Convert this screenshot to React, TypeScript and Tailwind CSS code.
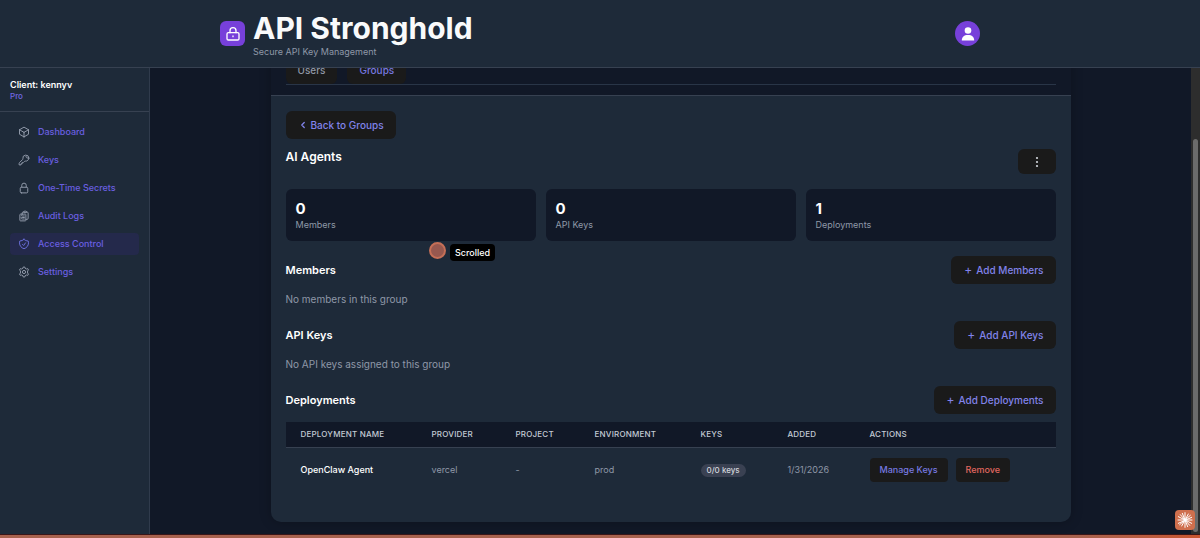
import React from 'react';
import {
  HiOutlineCube,
  HiOutlineKey,
  HiOutlineLockClosed,
  HiOutlineClipboardDocumentList,
  HiOutlineShieldCheck,
} from 'react-icons/hi2';
import { ChevronLeft } from 'lucide-react';

const HexGear = ({ className }: { className?: string }) => (
  <svg viewBox="0 0 24 24" fill="none" stroke="currentColor" strokeLinejoin="round" className={className}>
    <path d="M10.500 2h3l.8 2.600 2.500 1.400 2.700-.7 1.500 2.600-1.900 2v4.200l1.900 2-1.500 2.600-2.700-.7-2.500 1.400-.8 2.600h-3l-.8-2.600-2.500-1.400-2.700.7L3 16.100l1.900-2V9.900L3 7.900l1.500-2.600 2.700.7 2.500-1.400z" />
    <circle cx="12" cy="12" r="3.200" />
  </svg>
);

const navItems = [
  { label: 'Dashboard', icon: HiOutlineCube },
  { label: 'Keys', icon: HiOutlineKey },
  { label: 'One-Time Secrets', icon: HiOutlineLockClosed },
  { label: 'Audit Logs', icon: HiOutlineClipboardDocumentList },
  { label: 'Access Control', icon: HiOutlineShieldCheck, active: true },
  { label: 'Settings', icon: HexGear },
];

const stats = [
  { value: 0, label: 'Members' },
  { value: 0, label: 'API Keys' },
  { value: 1, label: 'Deployments' },
];

const Header = () => (
  <header className="h-[68px] shrink-0 border-b border-[#374151] bg-[#1e2a39]">
    <div className="mx-auto flex h-full max-w-[760px] items-center justify-between">
      <div className="flex items-center gap-2">
        <div className="flex size-[25px] items-center justify-center rounded-md bg-[#7740da] text-white">
          <svg viewBox="0 0 24 24" fill="none" stroke="currentColor" strokeWidth="2" strokeLinecap="round" className="size-4">
            <rect x="3" y="10" width="18" height="11" rx="2" />
            <path d="M7.500 10V7a4.500 4.500 0 0 1 9 0v3M12 15v1" />
          </svg>
        </div>
        <div>
          <h1 className="text-[30px] leading-[35px] font-bold text-[#f9fafb]">API Stronghold</h1>
          <p className="text-[9px] leading-[11px] text-[#8f98a8]">Secure API Key Management</p>
        </div>
      </div>
      <button aria-label="Account" className="flex size-[25px] items-center justify-center rounded-full bg-[#7740da] text-white">
        <svg viewBox="0 0 16 16" fill="currentColor" className="size-4">
          <circle cx="8" cy="4.500" r="3.300" />
          <path d="M1.800 14.500c0-3.500 2.200-5.500 6.200-5.500s6.200 2 6.200 5.500z" />
        </svg>
      </button>
    </div>
  </header>
);

const Sidebar = () => (
  <aside className="w-[150px] shrink-0 border-r border-[#303b4c] bg-[#1e2a39]">
    <div className="border-b border-[#374151] px-2.5 pt-[11px] pb-2.5">
      <p className="text-[9px] leading-3 font-semibold text-white">Client: kennyv</p>
      <p className="text-[8px] leading-[10px] font-medium text-[#7267e0]">Pro</p>
    </div>
    <nav className="flex flex-col gap-1.5 px-2.5 pt-[9px]">
      {navItems.map(({ label, icon: Icon, active }) => (
        <a
          key={label}
          href="#"
          className={`flex h-[22px] items-center gap-2 rounded px-2 text-[9px] font-medium text-[#6a5fe0] ${active ? 'bg-[#24294b]' : ''}`}
        >
          <Icon className={`size-3 stroke-2 ${active ? 'text-[#6a6fd8]' : 'text-[#8f98a8]'}`} />
          {label}
        </a>
      ))}
    </nav>
  </aside>
);

const AddButton = ({ children }: { children: React.ReactNode }) => (
  <button className="flex h-7 items-center gap-[3px] rounded-md bg-[#1a1a1a] px-3 text-[10px] font-medium text-[#8183ea]">
    <span className="w-[10px] text-center text-xs font-normal">+</span>
    {children}
  </button>
);

const Section = ({ title, action, empty }: { title: string; action: string; empty?: string }) => (
  <section>
    <div className="flex items-center justify-between">
      <h3 className="text-[11px] font-semibold text-white">{title}</h3>
      <AddButton>{action}</AddButton>
    </div>
    {empty && <p className="pt-2 pb-[14px] text-[10px] leading-[15px] text-[#8f98a8]">{empty}</p>}
  </section>
);

const DeploymentsTable = () => (
  <table className="mt-2 w-full table-fixed text-left text-[9px]">
    <thead className="border-b border-[#374151] bg-[#111827]">
      <tr className="h-[25px] text-[8px] tracking-wide text-[#c3cad4] uppercase">
        <th className="w-[131px] pl-[15px] font-medium">Deployment Name</th>
        <th className="w-[84px] pl-[15px] font-medium">Provider</th>
        <th className="w-[79px] pl-[15px] font-medium">Project</th>
        <th className="w-[106px] pl-[15px] font-medium">Environment</th>
        <th className="w-[87px] pl-[15px] font-medium">Keys</th>
        <th className="w-[82px] pl-[15px] font-medium">Added</th>
        <th className="pl-[15px] font-medium">Actions</th>
      </tr>
    </thead>
    <tbody>
      <tr className="h-[45px] text-[#8f98a8]">
        <td className="pl-[15px] font-medium text-white">OpenClaw Agent</td>
        <td className="pl-[15px]">vercel</td>
        <td className="pl-[15px]">-</td>
        <td className="pl-[15px]">prod</td>
        <td className="pl-[15px]">
          <span className="inline-block rounded-full bg-[#3a4152] px-1.5 text-[8px] leading-[13px] font-medium text-[#d1d5db]">0/0 keys</span>
        </td>
        <td className="pl-[15px]">1/31/2026</td>
        <td className="pl-[15px]">
          <div className="flex gap-2">
            <button className="h-6 rounded bg-[#1a1a1a] px-[10px] font-medium text-[#7779e0]">Manage Keys</button>
            <button className="h-6 rounded bg-[#1a1a1a] px-[10px] font-medium text-[#e0675f]">Remove</button>
          </div>
        </td>
      </tr>
    </tbody>
  </table>
);

const GroupDetail = () => (
  <div className="rounded-b-[10px] border-t border-[#374151] bg-[#1e2a39] px-[15px] pt-[15px] pb-[30px]">
    <button className="flex h-7 items-center gap-[3px] rounded-md bg-[#1a1a1a] px-3 text-[10px] font-medium text-[#8183ea]">
      <ChevronLeft className="size-[10px] stroke-3" />
      Back to Groups
    </button>
    <div className="flex items-start justify-between pt-[10px]">
      <h2 className="text-[12px] leading-4 font-semibold text-white">AI Agents</h2>
      <button aria-label="Group options" className="flex h-[25px] w-[38px] items-center justify-center rounded-md bg-[#1a1a1a] text-[#d1d5db]">
        <svg viewBox="0 0 12 12" fill="currentColor" className="size-3">
          <circle cx="6" cy="2" r="1.100" />
          <circle cx="6" cy="6" r="1.100" />
          <circle cx="6" cy="10" r="1.100" />
        </svg>
      </button>
    </div>
    <div className="grid grid-cols-3 gap-[10px] py-[15px]">
      {stats.map((s) => (
        <div key={s.label} className="rounded-md bg-[#111827] p-[10px]">
          <div className="text-[15px] leading-5 font-bold text-white">{s.value}</div>
          <div className="text-[9px] leading-3 text-[#8f98a8]">{s.label}</div>
        </div>
      ))}
    </div>
    <Section title="Members" action="Add Members" empty="No members in this group" />
    <Section title="API Keys" action="Add API Keys" empty="No API keys assigned to this group" />
    <Section title="Deployments" action="Add Deployments" />
    <DeploymentsTable />
  </div>
);

export default function App() {
  return (
    <div className="flex h-screen flex-col overflow-hidden bg-[#111827] font-[Inter,sans-serif]">
      <Header />
      <div className="flex min-h-0 flex-1">
        <Sidebar />
        <main className="min-w-0 flex-1 overflow-hidden px-[120px]">
          <div className="mx-auto max-w-[800px] rounded-b-[10px] shadow-[0_0_12px_rgba(0,0,0,0.25)]">
            {/* tabs are scrolled half way under the header */}
            <div className="-mt-3 px-[15px] pb-[10px]">
              <div className="flex gap-[10px] border-b border-[#293547] text-[10px] font-medium">
                <button className="h-7 rounded-md bg-[#1a1a1a] px-3 text-[#8f98a8]">Users</button>
                <button className="h-7 rounded-md bg-[#1a1a1a] px-3 text-[#7779e0]">Groups</button>
              </div>
            </div>
            <GroupDetail />
          </div>
        </main>
        <div className="flex w-[9px] shrink-0 justify-center bg-[#2d2d2d] pt-[71px]">
          <div className="mb-1.5 w-[5px] rounded-full bg-[#6b6b6b]" />
        </div>
      </div>

      {/* Agent overlay */}
      <div className="pointer-events-none fixed inset-x-0 bottom-0 h-1 border-t border-[#3a1518] bg-linear-to-r from-[#a8624e] from-90% to-[#c9552f]" />
      <div className="fixed top-[242px] left-[429px] flex items-start gap-1">
        <span className="size-[17px] rounded-full border-2 border-[#c56f57] bg-[#97584f]" />
        <span className="mt-[2px] rounded bg-black px-[5px] text-[9px] leading-[17px] font-medium text-white">Scrolled</span>
      </div>
      <button aria-label="Claude" className="fixed right-[5px] bottom-2 flex size-5 items-center justify-center rounded bg-[#cf6f4d] text-white">
        <svg viewBox="0 0 24 24" stroke="currentColor" strokeWidth="1.500" strokeLinecap="round" className="size-4">
          <path d="M12 1v22M1.500 12h21M5 4l14 16M20 5L4 19M8 2l8 20M17 3L7 21M2 7l20 10M2 17l20-9" />
        </svg>
      </button>
    </div>
  );
}
